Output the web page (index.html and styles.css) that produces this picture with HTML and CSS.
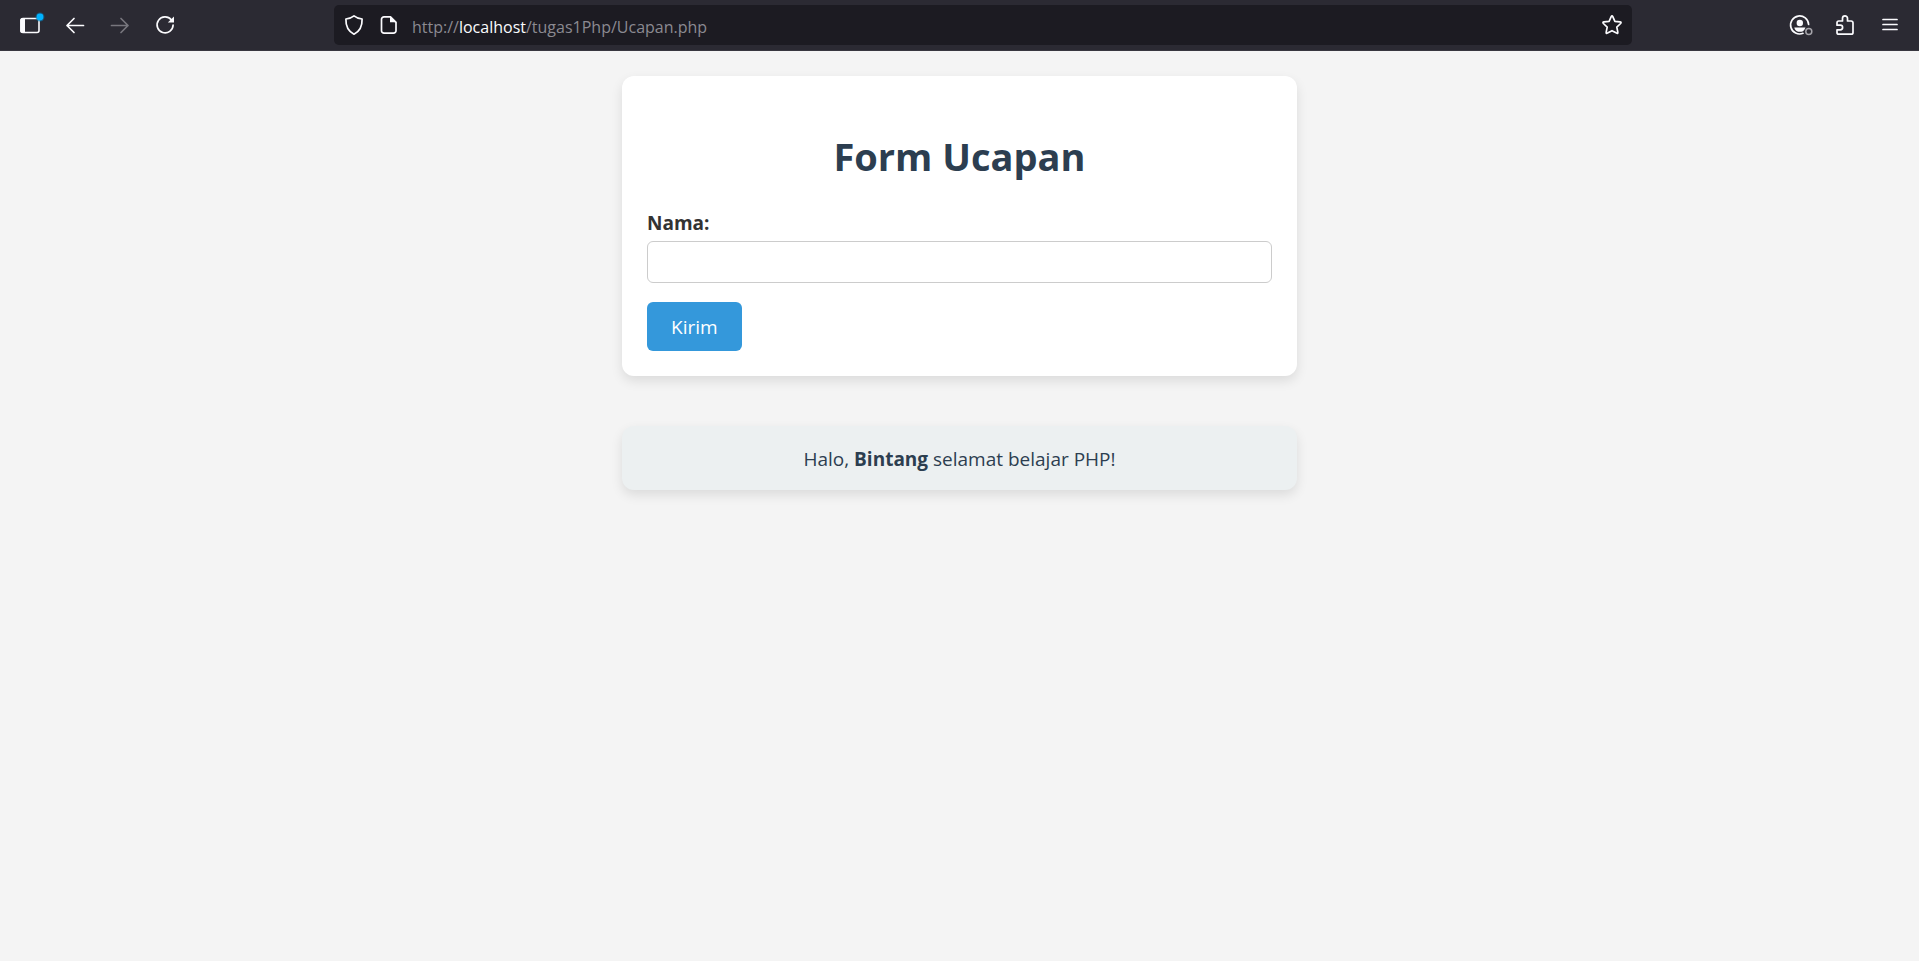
FILE: index.html
```
<!DOCTYPE html>
<html lang="id">
<head>
<meta charset="utf-8">
<title>Form Ucapan</title>
<link rel="stylesheet" href="styles.css">
</head>
<body>
<header class="toolbar">
  <nav class="tools tools-left">
    <button class="tool" type="button" aria-label="Sidebar">
      <svg class="icon" viewBox="0 0 24 24"><rect x="3" y="5.5" width="18" height="14" rx="2" fill="none" stroke="currentColor" stroke-width="1.6"/><path d="M2.2 7.500a2.500 2.500 0 0 1 2.500-2.500H7v15H4.700a2.500 2.500 0 0 1-2.500-2.500z" fill="currentColor"/><circle cx="22" cy="4" r="4.500" fill="#0b6fa4" opacity=".6"/><circle cx="22" cy="4" r="3.400" fill="#00b3ff"/></svg>
    </button>
    <button class="tool" type="button" aria-label="Back">
      <svg class="icon" viewBox="0 0 24 24"><path d="M20.500 12.500H4M11 5.500l-7 7 7 7" class="line"/></svg>
    </button>
    <button class="tool" type="button" aria-label="Forward" disabled>
      <svg class="icon" viewBox="0 0 24 24"><path d="M3.500 12.500H20M13 5.500l7 7-7 7" class="line"/></svg>
    </button>
    <button class="tool" type="button" aria-label="Reload">
      <svg class="icon" viewBox="0 0 24 24"><path d="M18.300 6.800A8 8 0 1 0 20.100 12" class="line"/><path d="M21 3.500v6h-6.200z" fill="currentColor"/></svg>
    </button>
  </nav>
  <div class="urlbar">
    <svg class="icon" viewBox="0 0 24 24"><path d="M12 2.800c-2.500 2-5.500 2.900-8.100 3.200C3.700 12.500 5.500 18 12 21.200c6.500-3.200 8.300-8.700 8.100-15.200-2.600-.3-5.600-1.200-8.100-3.200z" class="line"/></svg>
    <svg class="icon" viewBox="0 0 24 24"><path d="M13.500 3.800H7a2.500 2.500 0 0 0-2.500 2.500v11.400A2.500 2.500 0 0 0 7 20.200h9.500a2.500 2.500 0 0 0 2.500-2.500v-8.400z" class="line"/><path d="M13 3.300v6h6.500z" fill="currentColor"/></svg>
    <span class="url">http://<span class="host">localhost</span>/tugas1Php/Ucapan.php</span>
    <button class="star" type="button" aria-label="Bookmark">
      <svg class="icon" viewBox="0 0 24 24"><path d="M11.200 3.700q.8-1.500 1.600 0l2.100 4.600 5 .6q1.900.3.700 1.600l-3.800 3.600 1 5q.3 1.800-1.300 1L12 17.700l-4.500 2.400q-1.600.8-1.300-1l1-5-3.800-3.600q-1.200-1.300.7-1.600l5-.6z" class="line"/></svg>
    </button>
  </div>
  <nav class="tools tools-right">
    <button class="tool" type="button" aria-label="Account">
      <svg class="icon" viewBox="0 0 24 24"><path d="M20.600 11.500A9 9 0 1 0 15 20.300" class="line"/><circle cx="11.800" cy="10" r="3.200" fill="currentColor"/><path d="M6.300 14.500h11.200l-1 2-1.400 1.700c-2.500 1-5 .8-6.600-.3-1.200-.8-1.900-2-2.200-3.400z" fill="currentColor"/><circle cx="20.800" cy="18.500" r="3" fill="none" stroke="#a5a4aa" stroke-width="1.500"/></svg>
    </button>
    <button class="tool" type="button" aria-label="Extensions">
      <svg class="icon" viewBox="0 0 24 24"><path d="M5.800 21.200h12.400a1.800 1.800 0 0 0 1.800-1.800v-9.600A1.800 1.800 0 0 0 18.200 8h-3.700V5.300a2.500 2.500 0 0 0-5 0V8H5.800A1.800 1.800 0 0 0 4 9.800v2.400h3.300a2.300 2.300 0 0 1 0 4.600H4v2.600a1.800 1.800 0 0 0 1.800 1.800z" class="line"/></svg>
    </button>
    <button class="tool" type="button" aria-label="Menu">
      <svg class="icon" viewBox="0 0 24 24"><path d="M5 6.500h14M5 11.500h14M5 16.500h14" class="line"/></svg>
    </button>
  </nav>
</header>
<main class="page">
  <form class="card">
    <h1 class="title">Form Ucapan</h1>
    <label class="label" for="nama">Nama:</label>
    <input class="field" type="text" id="nama" name="nama">
    <button class="submit" type="submit">Kirim</button>
  </form>
  <p class="card greeting">Halo, <strong>Bintang</strong> selamat belajar PHP!</p>
</main>
</body>
</html>
```
FILE: styles.css
```
* { box-sizing: border-box; }
body {
  margin: 0;
  background: #f4f4f4;
  color: #333;
  font-family: "Segoe UI", "Open Sans", sans-serif;
  font-size: 19px;
  line-height: 26px;
}
button { border: 0; padding: 0; font: inherit; color: inherit; }
.toolbar {
  display: flex;
  align-items: center;
  height: 51px;
  background: #2b2a33;
  border-bottom: 1px solid #38373f;
  color: #fbfbfe;
}
.tools { display: flex; }
.tools-left { width: 334px; padding-left: 7px; }
.tools-right { width: 287px; padding-right: 7px; justify-content: flex-end; }
.tool {
  display: grid;
  place-items: center;
  width: 45px;
  height: 40px;
  background: transparent;
}
.tool:disabled { color: #77767d; }
.icon { display: block; width: 24px; height: 24px; overflow: visible; flex: none; }
.line {
  fill: none;
  stroke: currentColor;
  stroke-width: 1.7;
  stroke-linecap: round;
  stroke-linejoin: round;
}
.urlbar {
  display: flex;
  flex: 1;
  align-items: center;
  gap: 11px;
  height: 40px;
  padding: 0 8px;
  border-radius: 5px;
  background: #1c1b22;
}
.url { flex: 1; padding-top: 3px; font-size: 16px; color: #8b8a91; }
.host { color: #fbfbfe; }
.star { background: transparent; }
.page {
  display: flex;
  flex-direction: column;
  align-items: center;
  gap: 50px;
  padding: 25px;
}
.card {
  width: 100%;
  max-width: 675px;
  margin: 0;
  padding: 25px;
  border-radius: 12px;
  background: #fff;
  box-shadow: 0 5px 12px rgba(0, 0, 0, .1);
}
.title {
  margin: 28px 0 27px;
  color: #2c3e50;
  font-size: 38px;
  line-height: 54px;
  text-align: center;
}
.label { display: block; margin-bottom: 5px; font-weight: 700; }
.field {
  display: block;
  width: 100%;
  height: 42px;
  margin-bottom: 19px;
  padding: 0 12px;
  border: 1px solid #ccc;
  border-radius: 6px;
  background: #fff;
  font: inherit;
}
.submit {
  display: block;
  height: 49px;
  padding: 0 24px;
  border-radius: 6px;
  background: #3498db;
  color: #fff;
}
.greeting {
  padding: 20px 25px 18px;
  background: #ecf0f1;
  color: #2c3e50;
  text-align: center;
}
```
